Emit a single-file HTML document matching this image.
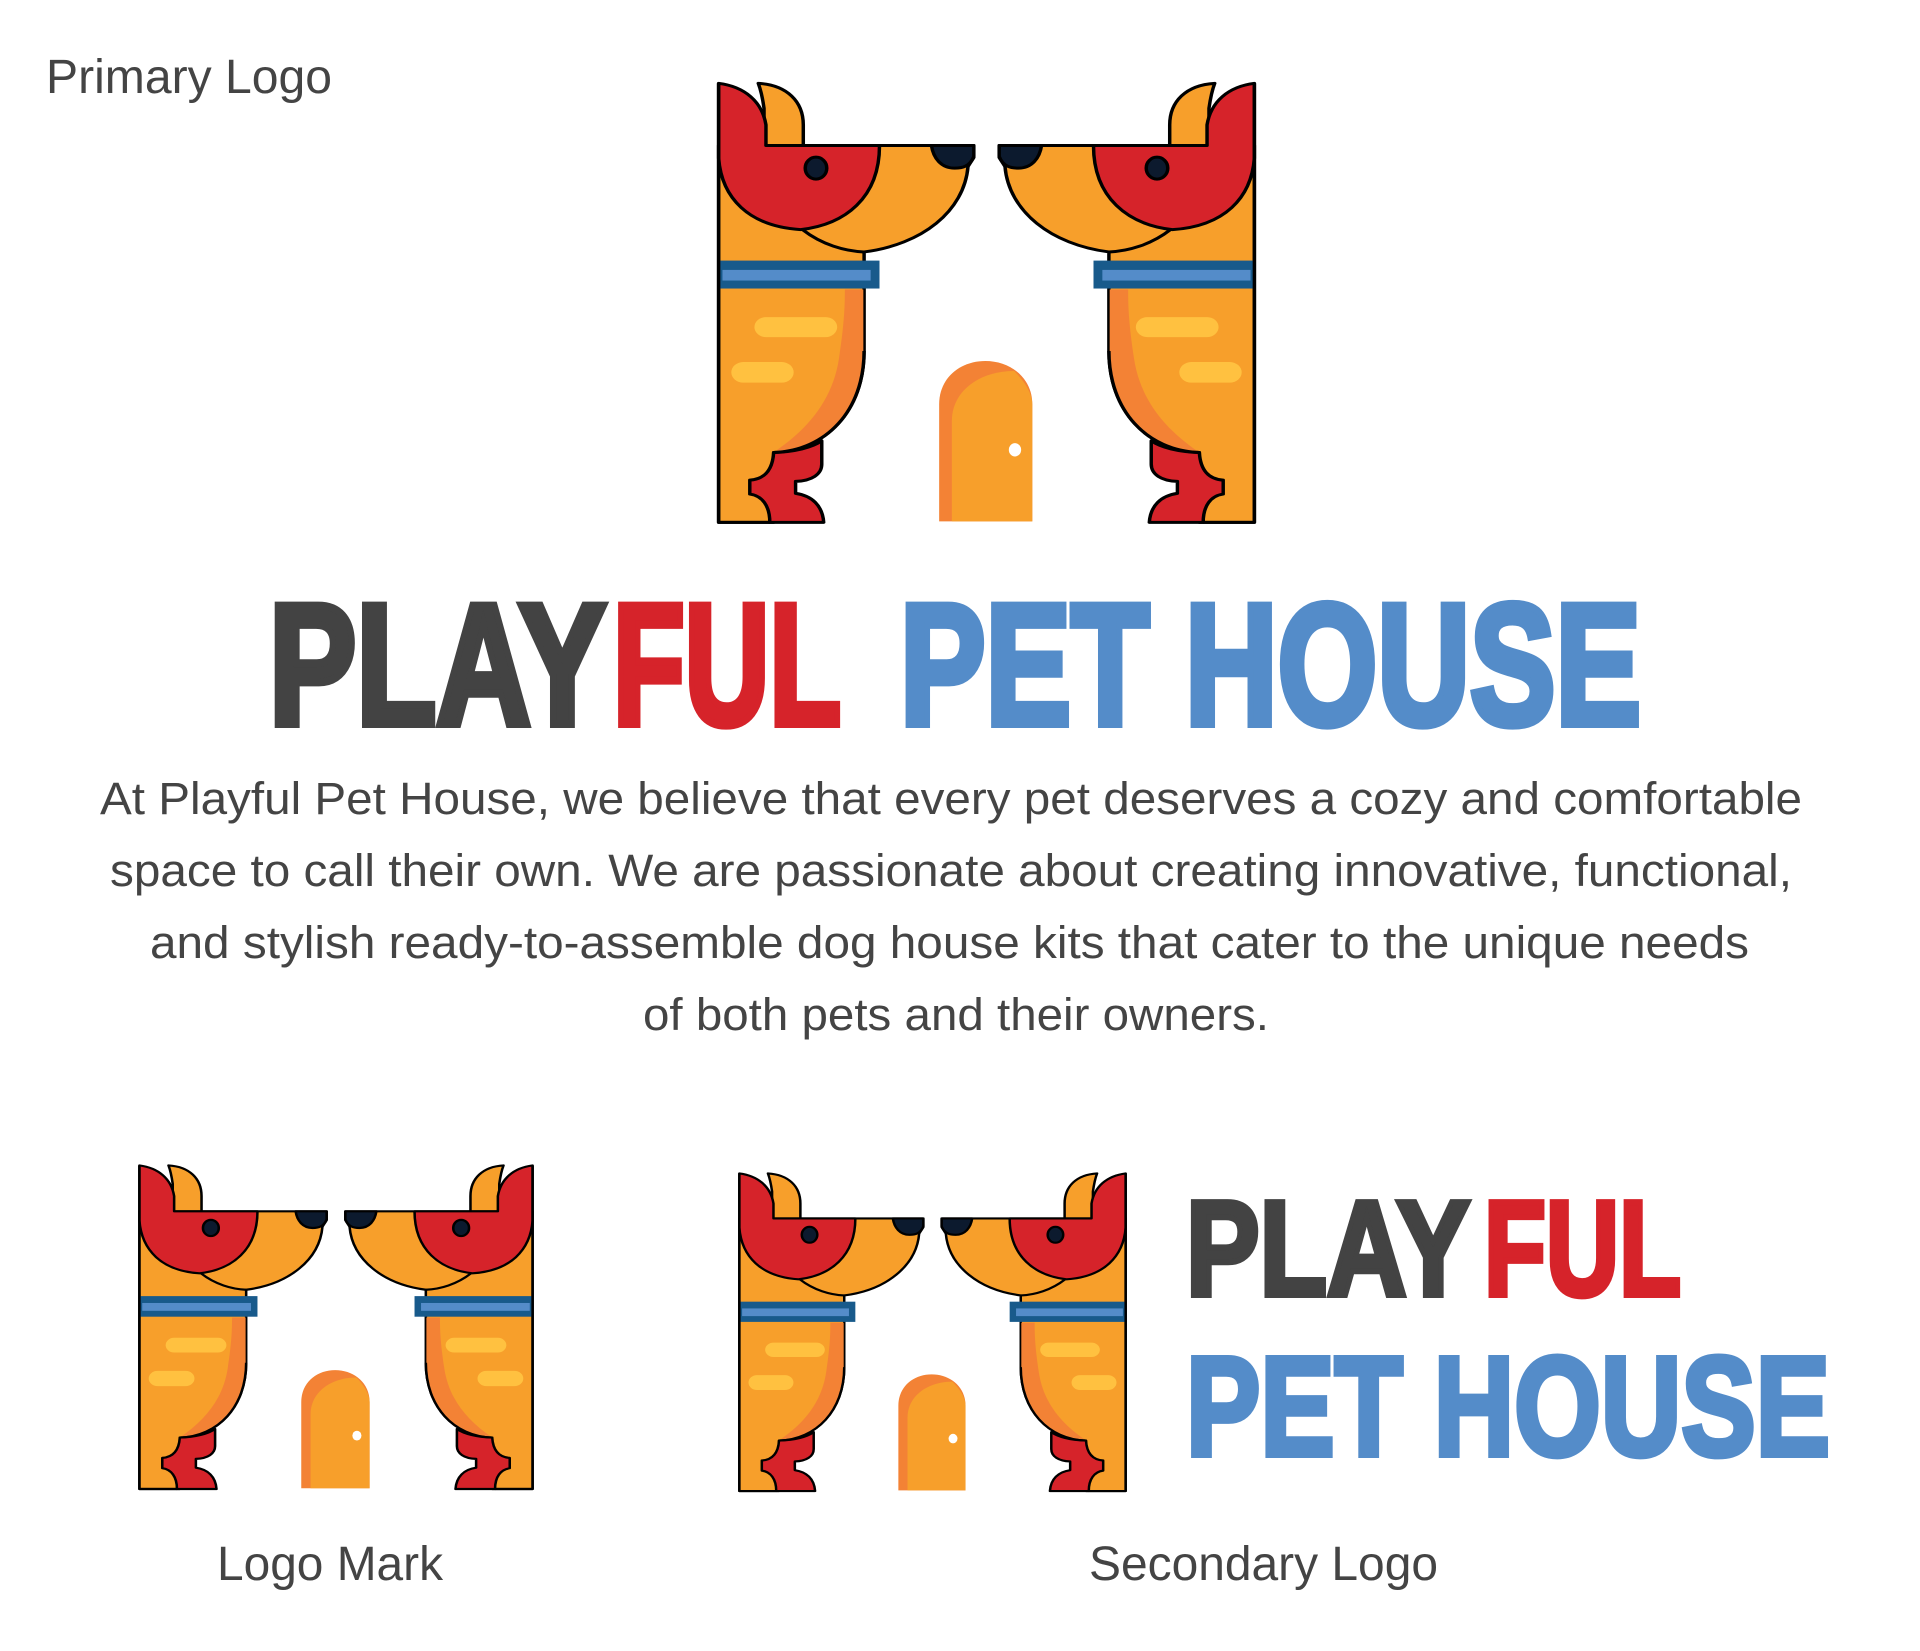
<!DOCTYPE html>
<html><head><meta charset="utf-8"><style>
html,body{margin:0;padding:0;background:#fff;}
svg{display:block;}
</style></head><body>
<svg width="1920" height="1651" viewBox="0 0 1920 1651" xmlns="http://www.w3.org/2000/svg">
<defs>
<g id="half" stroke="#000" stroke-width="9" stroke-linejoin="round">
  <path d="M52,262 L715,262 L715,298 L700,325 C690,460 580,560 430,582 L430,880 C430,1060 330,1180 195,1185 L195,1395 L52,1395 Z" fill="#F79F2B"/>
  <path d="M380,695 L428,695 L428,880 C428,1060 330,1178 197,1183 C290,1110 350,1020 365,900 C378,800 380,750 380,695 Z" fill="#F38235" stroke="none"/>
  <path d="M195,1185 C250,1183 295,1170 320,1150 L320,1220 C320,1250 295,1270 252,1272 L252,1308 C295,1315 322,1345 325,1395 L185,1395 C185,1345 165,1315 133,1310 L133,1268 C170,1265 192,1240 195,1185 Z" fill="#D6232A"/>
  <path d="M430,880 C430,1060 330,1180 195,1185" fill="none"/>
  <rect x="145" y="778" width="215" height="60" rx="30" fill="#FFC140" stroke="none"/>
  <rect x="85" y="913" width="162" height="62" rx="31" fill="#FFC140" stroke="none"/>
  <path d="M270,515 C320,560 380,580 430,582" fill="none"/>
  <path d="M155,75 C230,80 272,130 272,200 L272,262 L170,262 L170,150 C165,110 160,90 155,75 Z" fill="#F79F2B"/>
  <path d="M52,75 C120,85 165,130 175,200 L175,262 L470,262 C470,420 380,500 265,515 C130,505 60,420 52,300 Z" fill="#D6232A"/>
  <ellipse cx="305" cy="330" rx="28" ry="33" fill="#0C1A2E"/>
  <path d="M605,262 L715,262 L715,295 C705,325 685,330 665,330 C630,330 610,300 605,262 Z" fill="#0C1A2E"/>
  <rect x="52" y="608" width="418" height="84" fill="#185A8B" stroke="none"/>
  <rect x="62" y="636" width="385" height="32" fill="#548CC9" stroke="none"/>
  <path d="M52,75 L52,1395 L185,1395" fill="none"/>
</g>
<symbol id="logo" viewBox="40 65 1416 1338" preserveAspectRatio="none">
  <use href="#half"/>
  <use href="#half" transform="translate(1496,0) scale(-1,1)"/>
  <path d="M625,1392 L625,1040 C625,960 680,910 745,910 C810,910 867,960 867,1040 L867,1392 Z" fill="#F38235"/>
  <path d="M658,1392 L658,1090 C658,1000 730,940 820,940 C850,975 867,1010 867,1040 L867,1392 Z" fill="#F79F2B"/>
  <ellipse cx="822" cy="1177" rx="16" ry="20" fill="#fff"/>
</symbol>
</defs>
<g font-family="Liberation Sans, Arial, sans-serif" fill="#444">
<text x="46" y="93" font-size="48" textLength="286" lengthAdjust="spacingAndGlyphs">Primary Logo</text>
<text x="217" y="1580" font-size="48" textLength="226" lengthAdjust="spacingAndGlyphs">Logo Mark</text>
<text x="1089" y="1580" font-size="48" textLength="349" lengthAdjust="spacingAndGlyphs">Secondary Logo</text>
<g font-size="45" transform="translate(-1,-3)">
<text x="101" y="817" textLength="1702" lengthAdjust="spacingAndGlyphs">At Playful Pet House, we believe that every pet deserves a cozy and comfortable</text>
<text x="111" y="889" textLength="1682" lengthAdjust="spacingAndGlyphs">space to call their own. We are passionate about creating innovative, functional,</text>
<text x="151" y="961" textLength="1599" lengthAdjust="spacingAndGlyphs">and stylish ready-to-assemble dog house kits that cater to the unique needs</text>
<text x="644" y="1033" textLength="626" lengthAdjust="spacingAndGlyphs">of both pets and their owners.</text>
</g>
</g>
<g transform="translate(-4,-4)">
<g font-family="Liberation Sans, Arial, sans-serif" font-weight="bold" stroke-linejoin="miter">
<text x="273" y="728" font-size="172" fill="#434343" stroke="#434343" stroke-width="8" textLength="337" lengthAdjust="spacingAndGlyphs">PLAY</text>
<text x="617" y="728" font-size="172" fill="#D6232A" stroke="#D6232A" stroke-width="8" textLength="228" lengthAdjust="spacingAndGlyphs">FUL</text>
<text x="904" y="728" font-size="172" fill="#548CC9" stroke="#548CC9" stroke-width="8" textLength="741" lengthAdjust="spacingAndGlyphs">PET HOUSE</text>
<text x="1190" y="1299" font-size="135" fill="#434343" stroke="#434343" stroke-width="6" textLength="284" lengthAdjust="spacingAndGlyphs">PLAY</text>
<text x="1488" y="1299" font-size="135" fill="#D6232A" stroke="#D6232A" stroke-width="6" textLength="197" lengthAdjust="spacingAndGlyphs">FUL</text>
<text x="1190" y="1459" font-size="141" fill="#548CC9" stroke="#548CC9" stroke-width="6" textLength="644" lengthAdjust="spacingAndGlyphs">PET HOUSE</text>
</g>
<use href="#logo" x="718" y="84" width="545" height="445"/>
<use href="#logo" x="140" y="1167" width="400" height="328"/>
<use href="#logo" x="740" y="1175" width="393" height="322"/>
</g>
</svg>
</body></html>
